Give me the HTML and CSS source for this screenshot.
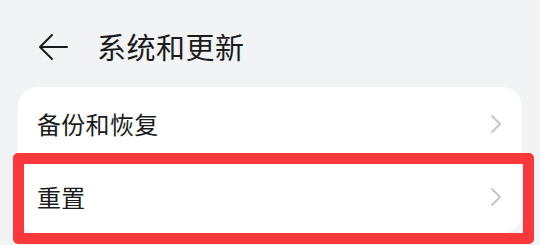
FILE: index.html
```html
<!DOCTYPE html>
<html lang="zh-CN">
<head>
    <meta charset="UTF-8">
    <meta name="viewport" content="width=device-width, initial-scale=1.0">
    <title>系统和更新</title>
    <link rel="stylesheet" href="styles.css">
</head>
<body>

    <div class="header">
        <svg class="back-icon" width="30" height="28" viewBox="0 0 30 28">
            <path d="M29 14 H2 M14 2 L2 14 L14 26" fill="none" stroke="#1b1b1b" stroke-width="2" stroke-linecap="round" stroke-linejoin="round"/>
        </svg>
        <h1 class="title">系统和更新</h1>
    </div>

    <div class="card">
        <div class="row">
            <span class="row-label">备份和恢复</span>
            <svg class="chevron" width="12" height="20" viewBox="0 0 12 20">
                <path d="M2 2 L10 10 L2 18" fill="none" stroke="#c4c4c4" stroke-width="1.8" stroke-linecap="round" stroke-linejoin="round"/>
            </svg>
        </div>
        <div class="row">
            <span class="row-label">重置</span>
            <svg class="chevron" width="12" height="20" viewBox="0 0 12 20">
                <path d="M2 2 L10 10 L2 18" fill="none" stroke="#c4c4c4" stroke-width="1.8" stroke-linecap="round" stroke-linejoin="round"/>
            </svg>
            <div class="mark"></div>
        </div>
    </div>

</body>
</html>
```

FILE: styles.css
```css
html, body { height: 100%; }
body {
    margin: 0;
    background: #f1f3f5;
    font-family: "Noto Sans CJK SC", "Noto Sans", sans-serif;
    color: #1b1b1b;
}

/* Header */
.header {
    display: flex;
    align-items: center;
    height: 87px;
    padding-left: 38px;
    box-sizing: border-box;
    padding-top: 6px;
}
.back-icon { display: block; }
.title {
    margin: 0 0 0 29px;
    font-size: 29px;
    font-weight: 400;
    line-height: 1;
    letter-spacing: 0.5px;
}

/* Card list */
.card {
    margin: 0 18px;
    background: white;
    border-radius: 20px;
}
.row {
    position: relative;
    display: flex;
    align-items: center;
    justify-content: space-between;
    height: 73px;
    padding: 0 20px 0 19px;
}
.row-label {
    font-size: 24px;
    line-height: 1;
    letter-spacing: 0.3px;
}
.chevron { display: block; }

/* Red annotation box */
.mark {
    position: absolute;
    left: -5px;
    top: -7px;
    right: -12px;
    bottom: -11px;
    border: 11px solid #f8383b;
    border-radius: 5px;
}
```
